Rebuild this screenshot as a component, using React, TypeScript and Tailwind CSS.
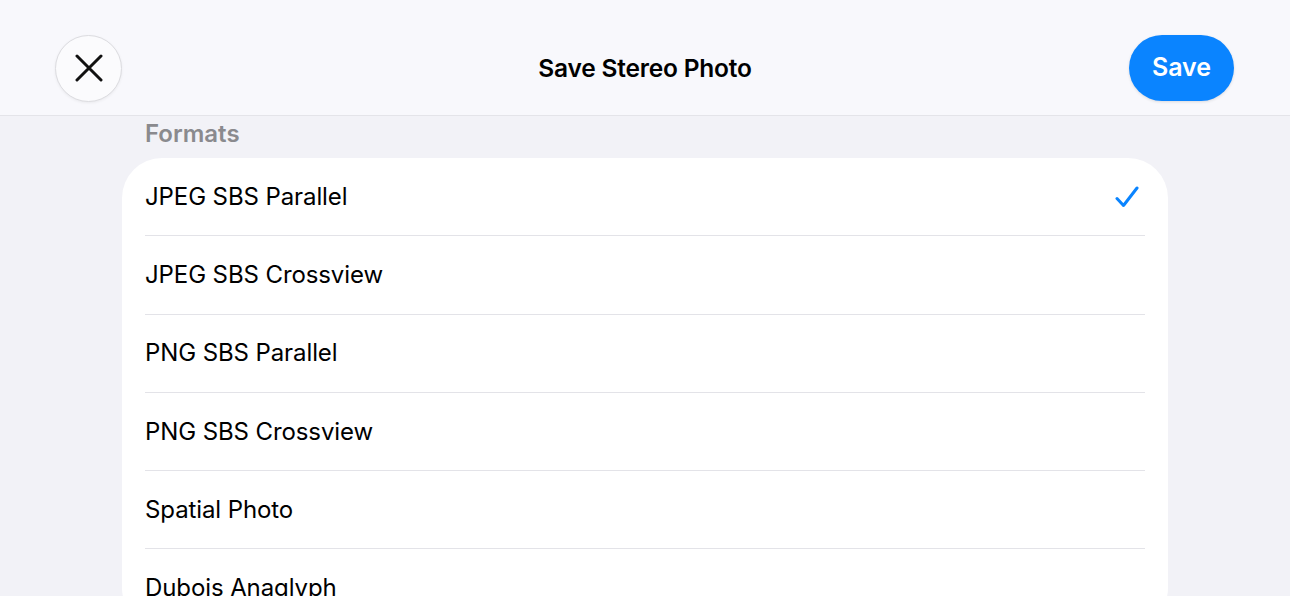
const formats = [
  'JPEG SBS Parallel',
  'JPEG SBS Crossview',
  'PNG SBS Parallel',
  'PNG SBS Crossview',
  'Spatial Photo',
  'Dubois Anaglyph',
]

export default function App() {
  const selected = 0

  return (
    <div className="h-[596px] w-[1290px] overflow-hidden bg-[#f2f2f7] font-['Inter',sans-serif] text-black">
      <header className="grid h-[116px] grid-cols-[1fr_auto_1fr] items-center border-b border-[#e4e4e9] bg-[#f8f8fc] px-[55px] pt-[21px]">
        <div className="flex">
          <button className="flex h-[67px] w-[67px] items-center justify-center rounded-full border border-[#dcdce0] bg-[#fbfbfd] shadow-[0_1px_3px_rgba(0,0,0,0.06)]">
            <svg width="28" height="28" viewBox="0 0 28 28" fill="none">
              <path d="M2 2L26 26M26 2L2 26" stroke="#111" strokeWidth="3" strokeLinecap="round" />
            </svg>
          </button>
        </div>
        <h1 className="text-[24.5px] font-semibold tracking-[-0.2px]">Save Stereo Photo</h1>
        <div className="flex justify-end">
          <button className="mr-[1px] h-[66px] w-[105px] rounded-full bg-[#0a84ff] text-[25px] font-semibold text-white shadow-[0_1px_3px_rgba(0,0,0,0.12)]">
            Save
          </button>
        </div>
      </header>

      <div className="mx-auto w-[1046px]">
        <div className="px-[23px] pt-[3px] pb-[9px] text-[24px] font-semibold leading-[30px] text-[#8a8a8e]">Formats</div>
        <div className="rounded-[40px] bg-white">
          {formats.map((f, i) => (
            <div key={f} className="pl-[23px] pr-[23px]">
              <div className="flex h-[78.3px] items-center justify-between border-b border-[#e3e3e8]">
                <span className="text-[24px] tracking-[-0.1px]">{f}</span>
                {i === selected && (
                  <svg width="24" height="22" viewBox="0 0 24 22" fill="none" className="mr-[6px]">
                    <path d="M2 12.5L8.5 19.5L22 2" stroke="#0a84ff" strokeWidth="3" strokeLinecap="round" strokeLinejoin="round" />
                  </svg>
                )}
              </div>
            </div>
          ))}
        </div>
      </div>
    </div>
  )
}
